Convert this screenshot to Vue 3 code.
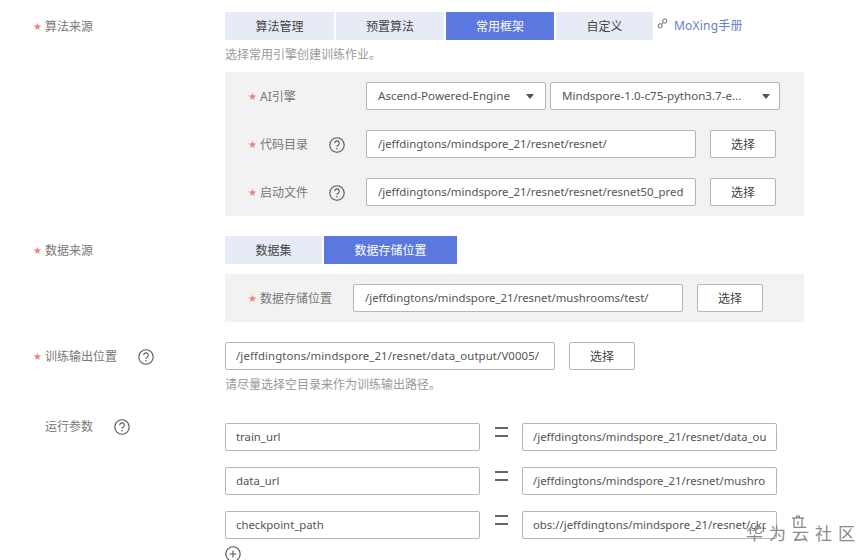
<script setup>
const algoTabs = [
  { name: '算法管理', w: 109 },
  { name: '预置算法', w: 108 },
  { name: '常用框架', w: 108, on: true },
  { name: '自定义', w: 97 }
]
const dataTabs = [
  { name: '数据集', w: 97 },
  { name: '数据存储位置', w: 133, on: true }
]
const params = [
  { k: 'train_url', v: '/jeffdingtons/mindspore_21/resnet/data_output/V0005/' },
  { k: 'data_url', v: '/jeffdingtons/mindspore_21/resnet/mushrooms/test/' },
  { k: 'checkpoint_path', v: 'obs://jeffdingtons/mindspore_21/resnet/ckpt/resnet-90_1.ckpt' }
]
</script>

<template>
  <div class="page">
    <section class="row algo">
      <div class="label"><i>★</i>算法来源</div>
      <div class="body">
        <div class="tabline">
          <div class="tabs">
            <div v-for="t in algoTabs" :key="t.name" class="tab" :class="{ on: t.on }" :style="{ width: t.w + 'px' }">{{ t.name }}</div>
          </div>
          <a class="link">
            <svg width="11" height="11" viewBox="0 0 11 11" fill="none" stroke="#666" stroke-width="1">
              <circle cx="7.8" cy="3" r="2.1" />
              <circle cx="3.2" cy="7.8" r="2.1" />
              <path d="M4.5 6.4l2-2" />
            </svg>
            <span>MoXing手册</span>
          </a>
        </div>
        <p class="hint">选择常用引擎创建训练作业。</p>
        <div class="panel p-algo">
          <div class="prow">
            <div class="plabel"><i>★</i>AI引擎</div>
            <div class="select s1"><span>Ascend-Powered-Engine</span><b></b></div>
            <div class="select s2"><span>Mindspore-1.0-c75-python3.7-e...</span><b></b></div>
          </div>
          <div class="prow">
            <div class="plabel"><i>★</i><span class="ltext">代码目录</span>
              <svg class="q" width="16" height="16" viewBox="0 0 16 16"><circle cx="8" cy="8" r="7.2" /><path d="M5.7 6.2a2.3 2.3 0 1 1 3.4 2c-.8.4-1.1.8-1.1 1.6" /><circle class="dot" cx="8" cy="11.8" r=".8" /></svg>
            </div>
            <div class="input w330"><span class="clip">/jeffdingtons/mindspore_21/resnet/resnet/</span></div>
            <div class="btn">选择</div>
          </div>
          <div class="prow">
            <div class="plabel"><i>★</i><span class="ltext">启动文件</span>
              <svg class="q" width="16" height="16" viewBox="0 0 16 16"><circle cx="8" cy="8" r="7.2" /><path d="M5.7 6.2a2.3 2.3 0 1 1 3.4 2c-.8.4-1.1.8-1.1 1.6" /><circle class="dot" cx="8" cy="11.8" r=".8" /></svg>
            </div>
            <div class="input w330"><span class="clip">/jeffdingtons/mindspore_21/resnet/resnet/resnet50_pred</span></div>
            <div class="btn">选择</div>
          </div>
        </div>
      </div>
    </section>

    <section class="row data">
      <div class="label"><i>★</i>数据来源</div>
      <div class="body">
        <div class="tabs">
          <div v-for="t in dataTabs" :key="t.name" class="tab" :class="{ on: t.on }" :style="{ width: t.w + 'px' }">{{ t.name }}</div>
        </div>
        <div class="panel p-data">
          <div class="prow">
            <div class="plabel narrow"><i>★</i>数据存储位置</div>
            <div class="input w330"><span class="clip">/jeffdingtons/mindspore_21/resnet/mushrooms/test/</span></div>
            <div class="btn">选择</div>
          </div>
        </div>
      </div>
    </section>

    <section class="row output">
      <div class="label wide"><i>★</i><span class="ltext">训练输出位置</span>
        <svg class="q" width="16" height="16" viewBox="0 0 16 16"><circle cx="8" cy="8" r="7.2" /><path d="M5.7 6.2a2.3 2.3 0 1 1 3.4 2c-.8.4-1.1.8-1.1 1.6" /><circle class="dot" cx="8" cy="11.8" r=".8" /></svg>
      </div>
      <div class="body">
        <div class="prow">
          <div class="input w330 pad10 spaced"><span class="clip">/jeffdingtons/mindspore_21/resnet/data_output/V0005/</span></div>
          <div class="btn">选择</div>
        </div>
        <p class="hint">请尽量选择空目录来作为训练输出路径。</p>
      </div>
    </section>

    <section class="row params">
      <div class="label plain"><i></i><span class="ltext">运行参数</span>
        <svg class="q" width="16" height="16" viewBox="0 0 16 16"><circle cx="8" cy="8" r="7.2" /><path d="M5.7 6.2a2.3 2.3 0 1 1 3.4 2c-.8.4-1.1.8-1.1 1.6" /><circle class="dot" cx="8" cy="11.8" r=".8" /></svg>
      </div>
      <div class="body">
        <div v-for="(p, i) in params" :key="p.k" class="param">
          <div class="input key pad10"><span class="clip">{{ p.k }}</span></div>
          <span class="eq"></span>
          <div class="input val pad10"><span class="clip">{{ p.v }}</span></div>
          <svg v-if="i === 2" class="trash" width="14" height="14" viewBox="0 0 14 14" fill="none" stroke="#666" stroke-width="1">
            <path d="M1 3h12M5.500 3V1h3v2M3 3v9.500h8V3M7 6v4" />
          </svg>
        </div>
        <svg class="plus" width="16" height="16" viewBox="0 0 16 16" fill="none" stroke="#555" stroke-width="1.100">
          <circle cx="8" cy="8" r="7.200" />
          <path d="M8 4.500v7M4.500 8h7" />
        </svg>
      </div>
    </section>

    <div class="mark">华为云社区</div>
  </div>
</template>

<style>
html, body { margin: 0; background: #fff; overflow: hidden; }
</style>

<style scoped>
.page {
  position: relative;
  width: 867px;
  height: 560px;
  overflow: hidden;
  box-sizing: border-box;
  padding-top: 12px;
  font-family: "Noto Sans", "Noto Sans CJK SC", sans-serif;
  font-size: 12px;
  color: #575d6c;
}
.row { display: flex; }
.label {
  width: 225px;
  flex: none;
  display: flex;
  align-items: flex-start;
  box-sizing: border-box;
  padding-left: 33px;
  padding-top: 1px;
  line-height: 28px;
  color: #777;
  height: 28px;
}
.label i, .plabel i {
  width: 12px;
  flex: none;
  font-style: normal;
  font-family: "DejaVu Sans", sans-serif;
  color: #e8827e;
  font-size: 10px;
}
.label i { margin-top: 0; }
.plabel i { line-height: 14px; margin-top: 1px; }
.body { width: 579px; flex: none; }
.tabline { display: flex; align-items: flex-start; }
.tabs { display: flex; gap: 2px; }
.tab {
  height: 28px;
  line-height: 30px;
  text-align: center;
  background: #e6ebf6;
  color: #444;
}
.tab.on { background: #5a78de; color: #fff; }
.link {
  display: flex;
  align-items: center;
  gap: 6px;
  margin-left: 4px;
  height: 25px;
  color: #6680c8;
  font-size: 12px;
}
.link span { letter-spacing: .2px; }
.link svg { margin-top: -2px; }
.hint { margin: 0; height: 18px; line-height: 19px; margin-top: 5px; color: #999; }
.panel { background: #f2f2f2; margin-top: 9px; box-sizing: border-box; }
.p-algo { height: 144px; padding-top: 10px; display: flex; flex-direction: column; gap: 20px; }
.p-data { height: 48px; margin-top: 10px; padding-top: 10px; }
.prow { display: flex; align-items: center; height: 28px; }
.plabel {
  width: 141px;
  flex: none;
  box-sizing: border-box;
  padding-left: 23px;
  display: flex;
  align-items: center;
  color: #777;
}
.plabel.narrow { width: 128px; }
.ltext { flex: none; }
.q {
  margin-left: 21px;
  margin-top: 2px;
  flex: none;
  fill: none;
  stroke: #555;
  stroke-width: 1.100;
}
.q .dot { fill: #555; stroke: none; }
.input, .select {
  height: 28px;
  box-sizing: border-box;
  border: 1px solid #b5b5b5;
  border-radius: 2px;
  background: #fff;
  line-height: 26px;
  color: #555;
  padding: 0 11px;
  font-size: 11.35px;
  white-space: nowrap;
  flex: none;
}
.spaced { letter-spacing: .12px; }
.clip { display: block; overflow: hidden; }
.select { display: flex; justify-content: space-between; align-items: center; font-size: 11.6px; }
.select b {
  width: 0;
  height: 0;
  border-left: 4px solid transparent;
  border-right: 4px solid transparent;
  border-top: 5px solid #555;
}
.s1 { width: 180px; }
.s2 { width: 230px; margin-left: 4px; }
.s2 b { margin-right: -2px; }
.w330 { width: 330px; }
.pad10 { padding: 0 10px; }
.btn {
  width: 66px;
  height: 28px;
  box-sizing: border-box;
  margin-left: 14px;
  border: 1px solid #b5b5b5;
  border-radius: 2px;
  background: #fff;
  text-align: center;
  line-height: 27px;
  color: #444;
  flex: none;
}
.data { margin-top: 20px; }
.output { margin-top: 20px; }
.label.wide .q { margin-top: 6px; }
.output .hint { margin-top: 5px; }
.params { margin-top: 30px; }
.label.plain { height: 16px; line-height: 16px; padding-top: 0; margin-top: -4px; }
.label.plain .q { margin-top: 0; }
.param { display: flex; align-items: center; height: 28px; margin-bottom: 16px; }
.param:last-of-type { margin-bottom: 0; }
.key { width: 255px; }
.eq {
  width: 42px;
  height: 10px;
  margin-top: -10px;
  flex: none;
  position: relative;
}
.eq::before {
  content: "";
  position: absolute;
  left: 15px;
  top: 0;
  width: 13px;
  height: 6px;
  border-top: 2px solid #666;
  border-bottom: 2px solid #666;
}
.val { width: 255px; }
.trash { margin-left: 14px; margin-top: -6px; flex: none; }
.plus { display: block; margin-top: 7px; }
.mark {
  position: absolute;
  left: 746px;
  top: 524px;
  font-size: 17px;
  letter-spacing: 6px;
  color: #8a8a8a;
  line-height: 20px;
  white-space: nowrap;
}
</style>
